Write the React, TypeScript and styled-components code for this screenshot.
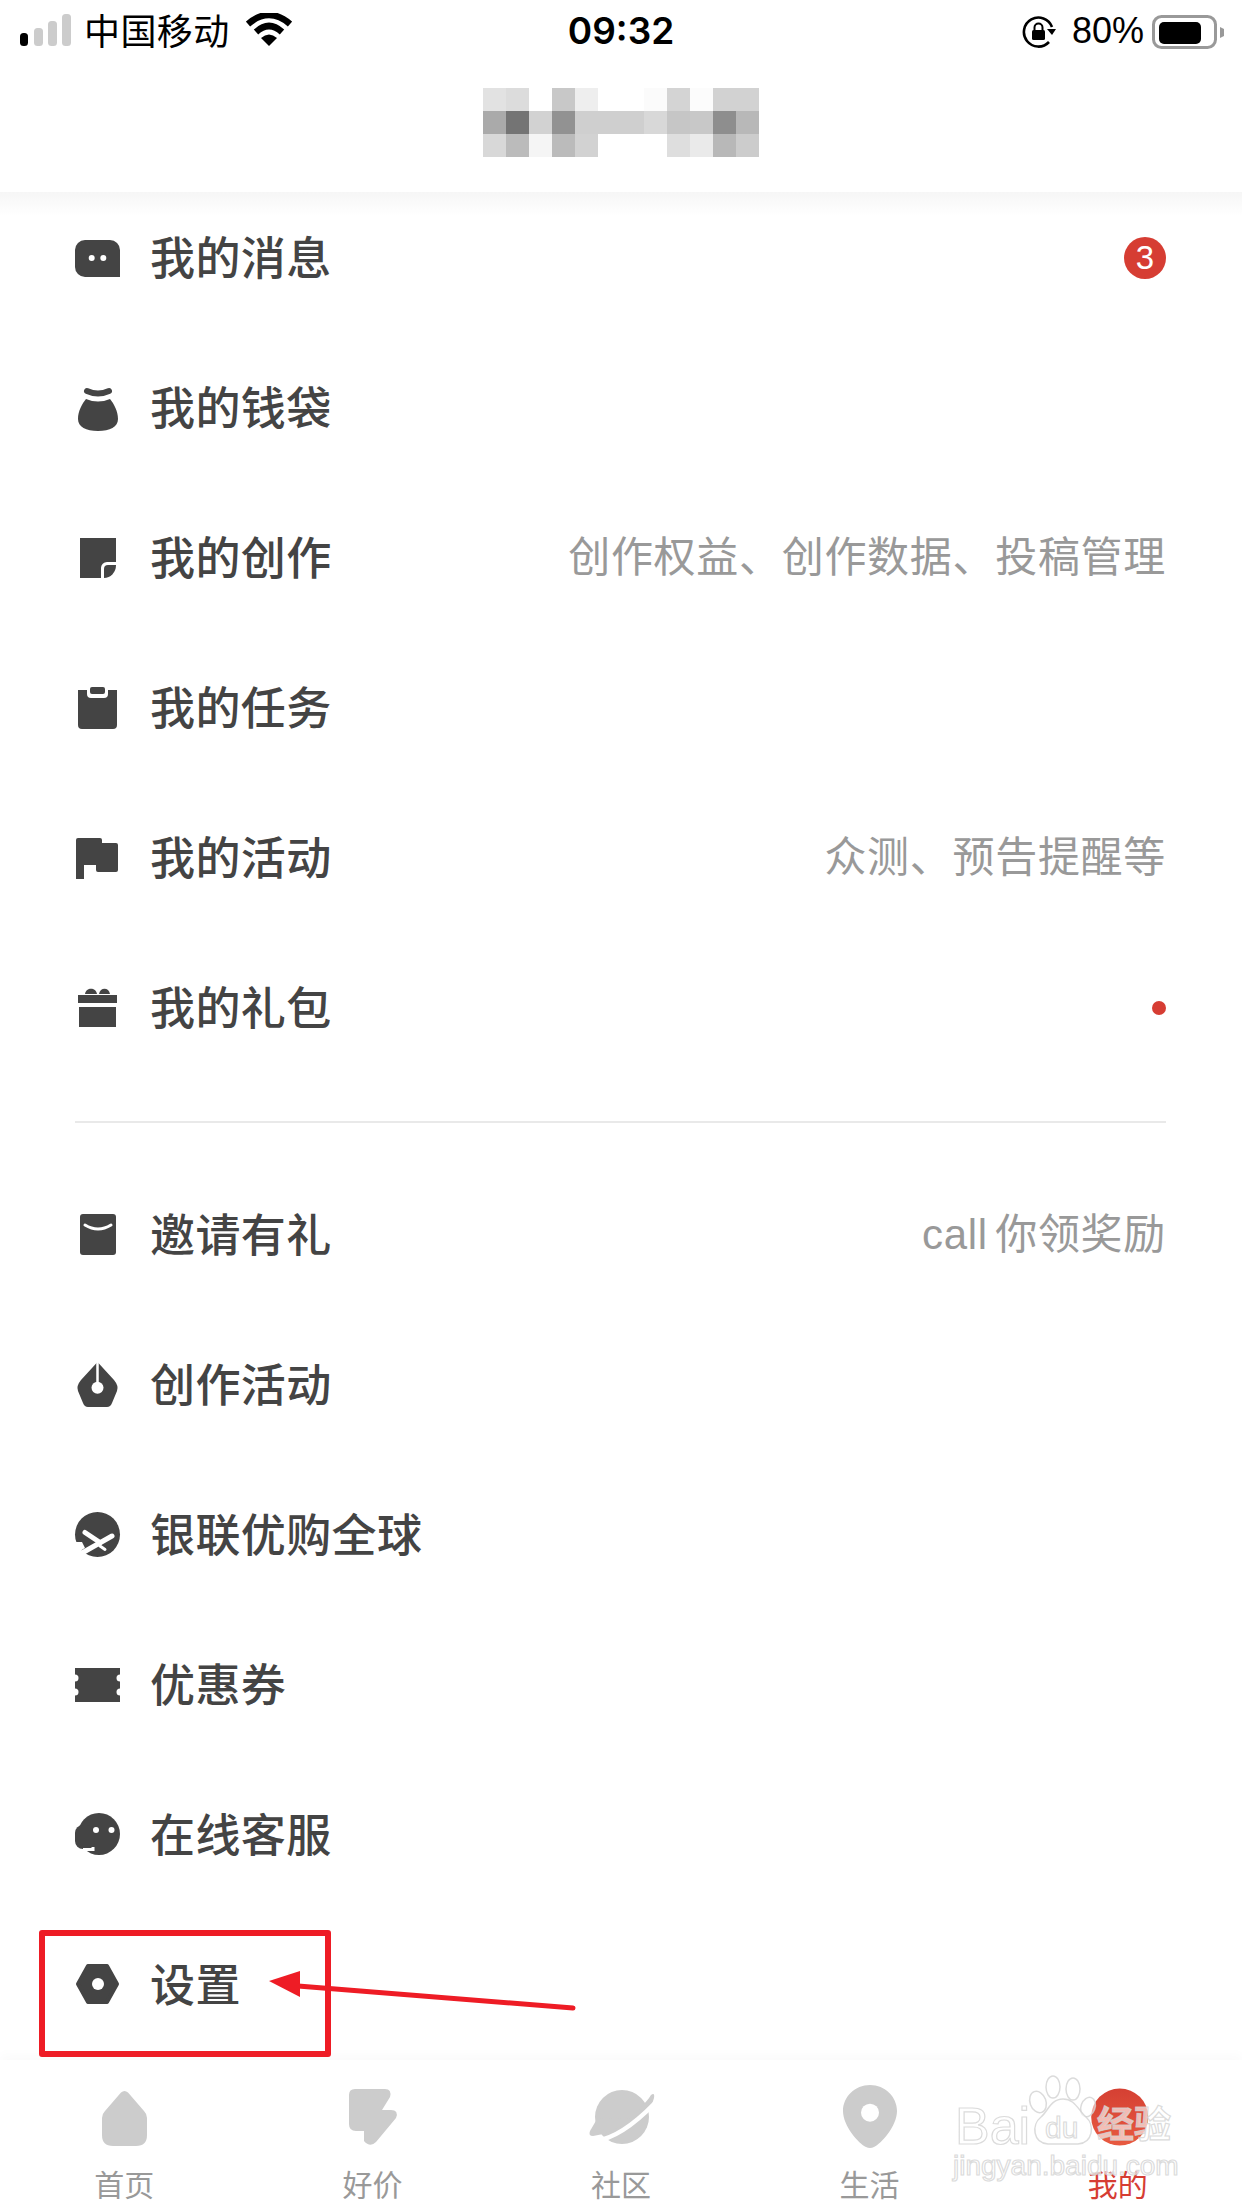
import React from "react";
import styled, { createGlobalStyle } from "styled-components";

const GlobalStyle = createGlobalStyle`
  html, body {
    margin: 0;
    padding: 0;
    background: #fff;
  }
  * {
    box-sizing: border-box;
  }
`;

const CJK = `"Noto Sans CJK SC", "Noto Sans", sans-serif`;

const Page = styled.div`
  position: relative;
  width: 1242px;
  height: 2208px;
  display: flex;
  flex-direction: column;
  overflow: hidden;
  background: #fff;
  font-family: ${CJK};
`;

const Header = styled.header`
  position: relative;
  z-index: 2;
  height: 192px;
  flex-shrink: 0;
  background: #fff;
  &::after {
    content: "";
    position: absolute;
    left: 0;
    right: 0;
    top: 100%;
    height: 24px;
    background: linear-gradient(#f6f6f6, rgba(255, 255, 255, 0));
  }
`;

const StatusBar = styled.div`
  height: 64px;
  display: grid;
  grid-template-columns: 1fr auto 1fr;
  align-items: center;
  color: #000;
`;

const StatusLeft = styled.div`
  display: flex;
  align-items: center;
  padding-left: 20px;
`;

const StatusRight = styled.div`
  display: flex;
  align-items: center;
  justify-content: flex-end;
  padding-right: 18px;
`;

const Carrier = styled.span`
  margin: 0 16px 6px 13px;
  font-size: 36px;
  line-height: 44px;
  letter-spacing: 0.4px;
`;

const WifiGlyph = styled.svg`
  width: 46px;
  height: 34px;
  margin-bottom: 4px;
`;

const Clock = styled.span`
  margin-bottom: 2px;
  font-family: Inter, "Liberation Sans", sans-serif;
  font-size: 37px;
  font-weight: 600;
  line-height: 44px;
`;

const Percent = styled.span`
  margin: 0 8px 2px 16px;
  font-family: "Liberation Sans", sans-serif;
  font-size: 36px;
  line-height: 44px;
`;

const TitleBar = styled.div`
  height: 128px;
  display: flex;
  justify-content: center;
  padding-top: 24px;
`;

const Mosaic = styled.div`
  display: grid;
  grid-template-columns: repeat(12, 23px);
  grid-auto-rows: 23px;
  height: 69px;
`;

const MosaicCell = styled.i<{ $shade: string }>`
  display: block;
  background: ${(props) => props.$shade};
`;

const List = styled.main`
  flex: 1;
  margin-top: -9px;
`;

const Section = styled.section<{ $last?: boolean }>`
  padding: ${(props) => (props.$last ? "37px 0 0" : "0 0 38px")};
`;

const Divider = styled.hr`
  height: 2px;
  margin: 0 76px 0 75px;
  border: 0;
  background: #e9e9e9;
`;

const Row = styled.div`
  height: 150px;
  display: flex;
  align-items: center;
  padding: 0 76px 0 74px;
`;

const RowIcon = styled.svg`
  width: 48px;
  height: 48px;
  flex-shrink: 0;
  margin-right: 28px;
  overflow: visible;
  fill: #444;
`;

const RowLabel = styled.span`
  flex: 1;
  margin-bottom: 4px;
  color: #444;
  font-size: 45px;
  font-weight: 500;
  line-height: 60px;
  letter-spacing: 0.4px;
`;

const RowHint = styled.span`
  color: #999;
  font-family: "Liberation Sans", ${CJK};
  font-size: 42px;
  letter-spacing: 0.7px;
  word-spacing: -5px;
  line-height: 56px;
`;

const Badge = styled.span`
  width: 42px;
  height: 42px;
  display: flex;
  align-items: center;
  justify-content: center;
  border-radius: 50%;
  background: #d63d33;
  color: #fff;
  font-family: "Liberation Sans", sans-serif;
  font-size: 33px;
`;

const Dot = styled.span`
  width: 14px;
  height: 14px;
  border-radius: 50%;
  background: #d63d33;
`;

const TabBar = styled.nav`
  position: relative;
  z-index: 2;
  height: 150px;
  flex-shrink: 0;
  display: grid;
  grid-template-columns: repeat(5, 1fr);
  background: #fff;
  box-shadow: 0 -6px 10px rgba(0, 0, 0, 0.018);
`;

const Tab = styled.div<{ $active?: boolean }>`
  display: flex;
  flex-direction: column;
  align-items: center;
  padding-top: 26px;
  color: ${(props) => (props.$active ? "#d63d33" : "#999")};
  font-size: 30px;
  line-height: 36px;
`;

const TabIcon = styled.svg`
  width: 64px;
  height: 64px;
  margin-bottom: 15px;
  overflow: visible;
  fill: #ccc;
`;

const RedBox = styled.div`
  position: absolute;
  z-index: 3;
  left: 39px;
  top: 1930px;
  width: 292px;
  height: 127px;
  border: 6px solid #ee1c25;
  border-radius: 3px;
`;

const Arrow = styled.svg`
  position: absolute;
  z-index: 3;
  left: 258px;
  top: 1964px;
  width: 325px;
  height: 50px;
`;

const Watermark = styled.div`
  position: absolute;
  z-index: 4;
  left: 953px;
  top: 2075px;
  width: 225px;
  height: 110px;
`;

const WatermarkPaw = styled.svg`
  position: absolute;
  inset: 0;
  width: 225px;
  height: 110px;
`;

const WatermarkText = styled.span<{ $x: number; $y: number; $size: number; $bold?: boolean }>`
  position: absolute;
  left: ${(props) => props.$x}px;
  top: ${(props) => props.$y}px;
  font-family: "Liberation Sans", ${CJK};
  font-size: ${(props) => props.$size}px;
  font-weight: ${(props) => (props.$bold ? 700 : 400)};
  line-height: 1;
  white-space: nowrap;
  color: rgba(255, 255, 255, 0.65);
  -webkit-text-stroke: 1.2px rgba(210, 210, 210, 0.8);
`;

const mosaic = [
  "#e2e2e2", "#dcdcdc", "#fff", "#c8c8c8", "#eee", "#fff", "#fff", "#fbfbfb", "#d4d4d4", "#fcfcfc", "#d2d2d2", "#d2d2d2",
  "#aaa", "#747474", "#d2d2d2", "#929292", "#cfcfcf", "#cfcfcf", "#cfcfcf", "#d8d8d8", "#c6c6c6", "#c8c8c8", "#8e8e8e", "#b8b8b8",
  "#d8d8d8", "#bbb", "#f5f5f5", "#bbb", "#d2d2d2", "#fff", "#fff", "#fff", "#dedede", "#eaeaea", "#b8b8b8", "#ccc",
];

const icons: Record<string, React.ReactNode> = {
  message: (
    <>
      <path d="M11 6H36a10 10 0 0 1 10 10V43H11A10 10 0 0 1 1 33V16A10 10 0 0 1 11 6Z" />
      <circle cx="17.7" cy="24" r="3" fill="#fff" />
      <circle cx="29.3" cy="24" r="3" fill="#fff" />
    </>
  ),
  wallet: (
    <>
      <path d="M13 7Q24 12 35 7" fill="none" stroke="#444" strokeWidth="6" strokeLinecap="round" />
      <path d="M12 15Q24 20 36 15C40 20 44 27 44 35C44 43 36 47 24 47C12 47 4 43 4 35C4 27 8 20 12 15Z" />
    </>
  ),
  note: (
    <>
      <path d="M6 4H42V28H33A6 6 0 0 0 27 34V44H6Z" />
      <path d="M30 44V35A4 4 0 0 1 34 31H42A12 13 0 0 1 30 44Z" />
    </>
  ),
  task: (
    <>
      <path d="M4 6H13V10a4 4 0 0 0 4 4H30a4 4 0 0 0 4-4V6H43V41a4 4 0 0 1-4 4H8a4 4 0 0 1-4-4Z" />
      <rect x="16" y="3" width="15" height="7" rx="2" />
    </>
  ),
  flag: (
    <path d="M4 4H26a2 2 0 0 1 2 2V9H42a2 2 0 0 1 2 2V36a2 2 0 0 1-2 2H24a2 2 0 0 1-2-2V31H10V45H2V6a2 2 0 0 1 2-2Z" />
  ),
  gift: (
    <>
      <path d="M11 10C12 3 22 3 23 10ZM25 10C26 3 35 3 36 10Z" />
      <rect x="4" y="11" width="39" height="8" />
      <rect x="5" y="23" width="37" height="20" />
    </>
  ),
  envelope: (
    <>
      <rect x="6" y="3" width="36" height="41" rx="3" />
      <path d="M11 14Q24 22 37 14" fill="none" stroke="#fff" strokeWidth="3" strokeLinecap="round" />
    </>
  ),
  pen: (
    <>
      <path d="M23.5 1L40 19Q45 25 43 30L38 42Q36.5 46 33 46H14Q10.5 46 9 42L4 30Q2 25 7 19Z" />
      <path d="M23.5 0V24" stroke="#fff" strokeWidth="2.5" />
      <circle cx="23.5" cy="26.7" r="6" fill="#fff" />
    </>
  ),
  plane: (
    <>
      <circle cx="23.5" cy="23.5" r="22.5" />
      <path d="M-1 31H8L11 37L6 40Z" fill="#fff" />
      <path d="M8 42L38 25" stroke="#fff" strokeWidth="5" strokeLinecap="round" />
      <path d="M11 21.5L26 31.5" stroke="#fff" strokeWidth="5" strokeLinecap="round" />
      <path d="M26 35L31 38.5" stroke="#fff" strokeWidth="3" strokeLinecap="round" />
    </>
  ),
  ticket: (
    <>
      <rect x="1" y="7" width="45" height="34" />
      <circle cx="1" cy="17" r="3.5" fill="#fff" />
      <circle cx="1" cy="31" r="3.5" fill="#fff" />
      <circle cx="46" cy="17" r="3.5" fill="#fff" />
      <circle cx="46" cy="31" r="3.5" fill="#fff" />
    </>
  ),
  service: (
    <>
      <circle cx="25" cy="23" r="21" />
      <rect x="1" y="14" width="20" height="24" rx="8" />
      <path d="M9 38.5H19V36" fill="none" stroke="#fff" strokeWidth="3" />
      <circle cx="22" cy="19" r="3" fill="#fff" />
      <circle cx="37.5" cy="19" r="3" fill="#fff" />
    </>
  ),
  gear: (
    <>
      <path d="M4 23L14 5H33L43 23L33 41H14Z" stroke="#444" strokeWidth="4" strokeLinejoin="round" />
      <circle cx="24" cy="23" r="6" fill="#fff" />
    </>
  ),
};

type RowData = {
  label: string;
  icon: string;
  hint?: string;
  badge?: number;
  dot?: boolean;
};

const topRows: RowData[] = [
  { label: "我的消息", icon: "message", badge: 3 },
  { label: "我的钱袋", icon: "wallet" },
  { label: "我的创作", icon: "note", hint: "创作权益、创作数据、投稿管理" },
  { label: "我的任务", icon: "task" },
  { label: "我的活动", icon: "flag", hint: "众测、预告提醒等" },
  { label: "我的礼包", icon: "gift", dot: true },
];

const bottomRows: RowData[] = [
  { label: "邀请有礼", icon: "envelope", hint: "call 你领奖励" },
  { label: "创作活动", icon: "pen" },
  { label: "银联优购全球", icon: "plane" },
  { label: "优惠券", icon: "ticket" },
  { label: "在线客服", icon: "service" },
  { label: "设置", icon: "gear" },
];

const tabs = [
  {
    label: "首页",
    icon: (
      <path d="M29 6.5Q32.5 3.5 36 6.5L52 25Q55 28 55 32V49Q55 60 44 60H21Q10 60 10 49V32Q10 28 13 25Z" />
    ),
  },
  {
    label: "好价",
    icon: (
      <path d="M14 3H44Q51 3 49 11L41 24H50Q58 24 55 32L35 56Q29 62 23 55V45H15Q8 45 8 38V9Q8 3 14 3Z" />
    ),
  },
  {
    label: "社区",
    icon: (
      <>
        <circle cx="33" cy="31" r="27" />
        <path d="M8 33L1 45Q-1 50 4 50Q24 48 44 32Z" />
        <path d="M50 22Q58 16 62 9Q66 6 65 12Q62 24 52 36Z" />
        <path d="M6 55Q32 52 66 17" fill="none" stroke="#fff" strokeWidth="4.5" />
      </>
    ),
  },
  {
    label: "生活",
    icon: (
      <>
        <path d="M33 -1C48 -1 60 11 60 25C60 40 44 58 37 61Q33 63 29 61C22 58 6 40 6 25C6 11 18 -1 33 -1Z" />
        <circle cx="33" cy="26.7" r="9" fill="#fff" />
      </>
    ),
  },
  {
    label: "我的",
    active: true,
    icon: (
      <>
        <defs>
          <linearGradient id="meGradient" x1="0" y1="0" x2="0" y2="1">
            <stop offset="0" stopColor="#d54033" />
            <stop offset="1" stopColor="#e85a40" />
          </linearGradient>
        </defs>
        <circle cx="33.7" cy="31" r="28.5" fill="url(#meGradient)" />
      </>
    ),
  },
];

const renderRow = (row: RowData) => (
  <Row key={row.label}>
    <RowIcon viewBox="0 0 48 48">{icons[row.icon]}</RowIcon>
    <RowLabel>{row.label}</RowLabel>
    {row.hint && <RowHint>{row.hint}</RowHint>}
    {row.badge && <Badge>{row.badge}</Badge>}
    {row.dot && <Dot />}
  </Row>
);

const App = () => {
  return (
    <Page>
      <GlobalStyle />
      <Header>
        <StatusBar>
          <StatusLeft>
            <svg width="51" height="36" viewBox="0 0 51 36">
              <rect x="0" y="19" width="8" height="13" rx="3.5" fill="#000" />
              <rect x="14" y="14" width="9" height="18" rx="3.5" fill="#ccc" />
              <rect x="28" y="7" width="9" height="25" rx="3.5" fill="#ccc" />
              <rect x="42" y="0" width="9" height="32" rx="3.5" fill="#ccc" />
            </svg>
            <Carrier>中国移动</Carrier>
            <WifiGlyph viewBox="0 0 46 34">
              <path d="M2 11Q23 -7 44 11" fill="none" stroke="#000" strokeWidth="6.5" />
              <path d="M10 19Q23 7 36 19" fill="none" stroke="#000" strokeWidth="6.5" />
              <path d="M15 25Q23 18 31 25L23 33Z" fill="#000" />
            </WifiGlyph>
          </StatusLeft>
          <Clock>09:32</Clock>
          <StatusRight>
            <svg width="34" height="34" viewBox="0 0 34 34">
              <path d="M27 27A14.5 14.5 0 1 1 30 12" fill="none" stroke="#000" strokeWidth="2.6" />
              <path d="M25 14H34L30 20Z" fill="#000" />
              <rect x="10" y="15" width="13" height="10" rx="1.5" fill="#000" />
              <path d="M12.5 15V12.5a4 4 0 0 1 8 0V15" fill="none" stroke="#000" strokeWidth="2" />
            </svg>
            <Percent>80%</Percent>
            <svg width="72" height="36" viewBox="0 0 72 36">
              <rect x="1.5" y="2.5" width="62" height="31" rx="8" fill="none" stroke="#999" strokeWidth="3" />
              <rect x="7" y="8" width="42" height="22" rx="5" fill="#000" />
              <path d="M68 13L72 15V22L68 24Z" fill="#999" />
            </svg>
          </StatusRight>
        </StatusBar>
        <TitleBar>
          <Mosaic>
            {mosaic.map((shade, index) => (
              <MosaicCell key={index} $shade={shade} />
            ))}
          </Mosaic>
        </TitleBar>
      </Header>
      <List>
        <Section>{topRows.map(renderRow)}</Section>
        <Divider />
        <Section $last>{bottomRows.map(renderRow)}</Section>
      </List>
      <TabBar>
        {tabs.map((tab) => (
          <Tab key={tab.label} $active={tab.active}>
            <TabIcon viewBox="0 0 64 64">{tab.icon}</TabIcon>
            {tab.label}
          </Tab>
        ))}
      </TabBar>
      <RedBox />
      <Arrow viewBox="0 0 325 50">
        <path d="M315 44L40 22" stroke="#ee1c25" strokeWidth="5" strokeLinecap="round" />
        <path d="M11 17L42 7V33Z" fill="#ee1c25" />
      </Arrow>
      <Watermark>
        <WatermarkPaw viewBox="0 0 225 110">
          <g fill="rgba(255,255,255,0.5)" stroke="rgba(210,210,210,0.8)" strokeWidth="1.5">
            <ellipse cx="100" cy="12" rx="7" ry="11" />
            <ellipse cx="120" cy="14" rx="7" ry="11" />
            <ellipse cx="85" cy="27" rx="8" ry="11" transform="rotate(-20 85 27)" />
            <ellipse cx="135" cy="32" rx="7" ry="10" transform="rotate(20 135 32)" />
            <path d="M110 24C122 24 125 35 133 42C142 50 140 68 125 69H95C80 68 78 50 88 42C95 36 98 24 110 24Z" />
          </g>
        </WatermarkPaw>
        <WatermarkText $x={2} $y={25} $size={52}>
          Bai
        </WatermarkText>
        <WatermarkText $x={92} $y={38} $size={30}>
          du
        </WatermarkText>
        <WatermarkText $x={144} $y={32} $size={37} $bold>
          经验
        </WatermarkText>
        <WatermarkText $x={0} $y={77} $size={28}>
          jingyan.baidu.com
        </WatermarkText>
      </Watermark>
    </Page>
  );
};

export default App;
